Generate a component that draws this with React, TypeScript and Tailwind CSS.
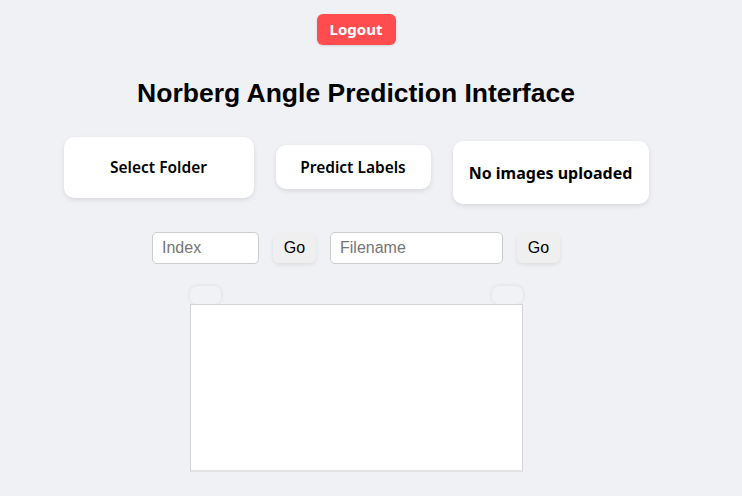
import React from 'react'

const App: React.FC = () => {
  return (
    <div className="min-h-[496px] w-full bg-[#f0f1f5] font-['Noto_Sans',sans-serif] text-black">
      <div className="flex w-[712px] flex-col items-center pt-[14px]">
        <button className="h-[31px] w-[79px] rounded-[6px] bg-[#ff4d4f] text-[15px] font-bold text-white shadow-sm">
          Logout
        </button>

        <h1 className="mt-[32px] font-['Liberation_Sans',Arial,sans-serif] text-[26.5px] font-bold leading-[32px]">
          Norberg Angle Prediction Interface
        </h1>

        <div className="mt-[21px] flex items-center gap-[22px]">
          <button className="h-[61px] w-[190px] rounded-[10px] bg-white pt-[2px] text-[15.5px] font-semibold shadow-[0_2px_5px_rgba(0,0,0,0.1)]">
            Select Folder
          </button>
          <button className="h-[44px] w-[155px] rounded-[10px] bg-white pt-[1px] text-[15.5px] font-semibold shadow-[0_2px_5px_rgba(0,0,0,0.1)]">
            Predict Labels
          </button>
          <div className="mt-[11px] flex h-[63px] w-[196px] items-center justify-center rounded-[10px] bg-white text-[16px] font-bold shadow-[0_2px_5px_rgba(0,0,0,0.1)]">
            No images uploaded
          </div>
        </div>

        <div className="mt-[28px] flex items-center gap-[14px] font-['Liberation_Sans',Arial,sans-serif] text-[16px]">
          <input
            placeholder="Index"
            className="h-[32px] w-[107px] rounded-[5px] border border-[#cccccc] bg-white px-[9px] placeholder:text-[#757575] outline-none"
          />
          <button className="h-[30px] w-[43px] rounded-[6px] bg-[#efefef] shadow-[0_2px_4px_rgba(0,0,0,0.08)]">Go</button>
          <input
            placeholder="Filename"
            className="h-[32px] w-[173px] rounded-[5px] border border-[#cccccc] bg-white px-[9px] placeholder:text-[#757575] outline-none"
          />
          <button className="h-[30px] w-[43px] rounded-[6px] bg-[#efefef] shadow-[0_2px_4px_rgba(0,0,0,0.08)]">Go</button>
        </div>

        <div className="mt-[22px] flex w-[333px] flex-col">
          <div className="flex justify-between">
            <button className="h-[18px] w-[31px] rounded-[7px] bg-[#f1f2f5] shadow-[0_0_4px_rgba(0,0,0,0.1)]" />
            <button className="h-[18px] w-[31px] rounded-[7px] bg-[#f1f2f5] shadow-[0_0_4px_rgba(0,0,0,0.1)]" />
          </div>
          <div className="h-[168px] w-[333px] border border-[#d4d4d4] border-b-2 border-b-[#e2e2e2] bg-white" />
        </div>
      </div>
    </div>
  )
}

export default App
